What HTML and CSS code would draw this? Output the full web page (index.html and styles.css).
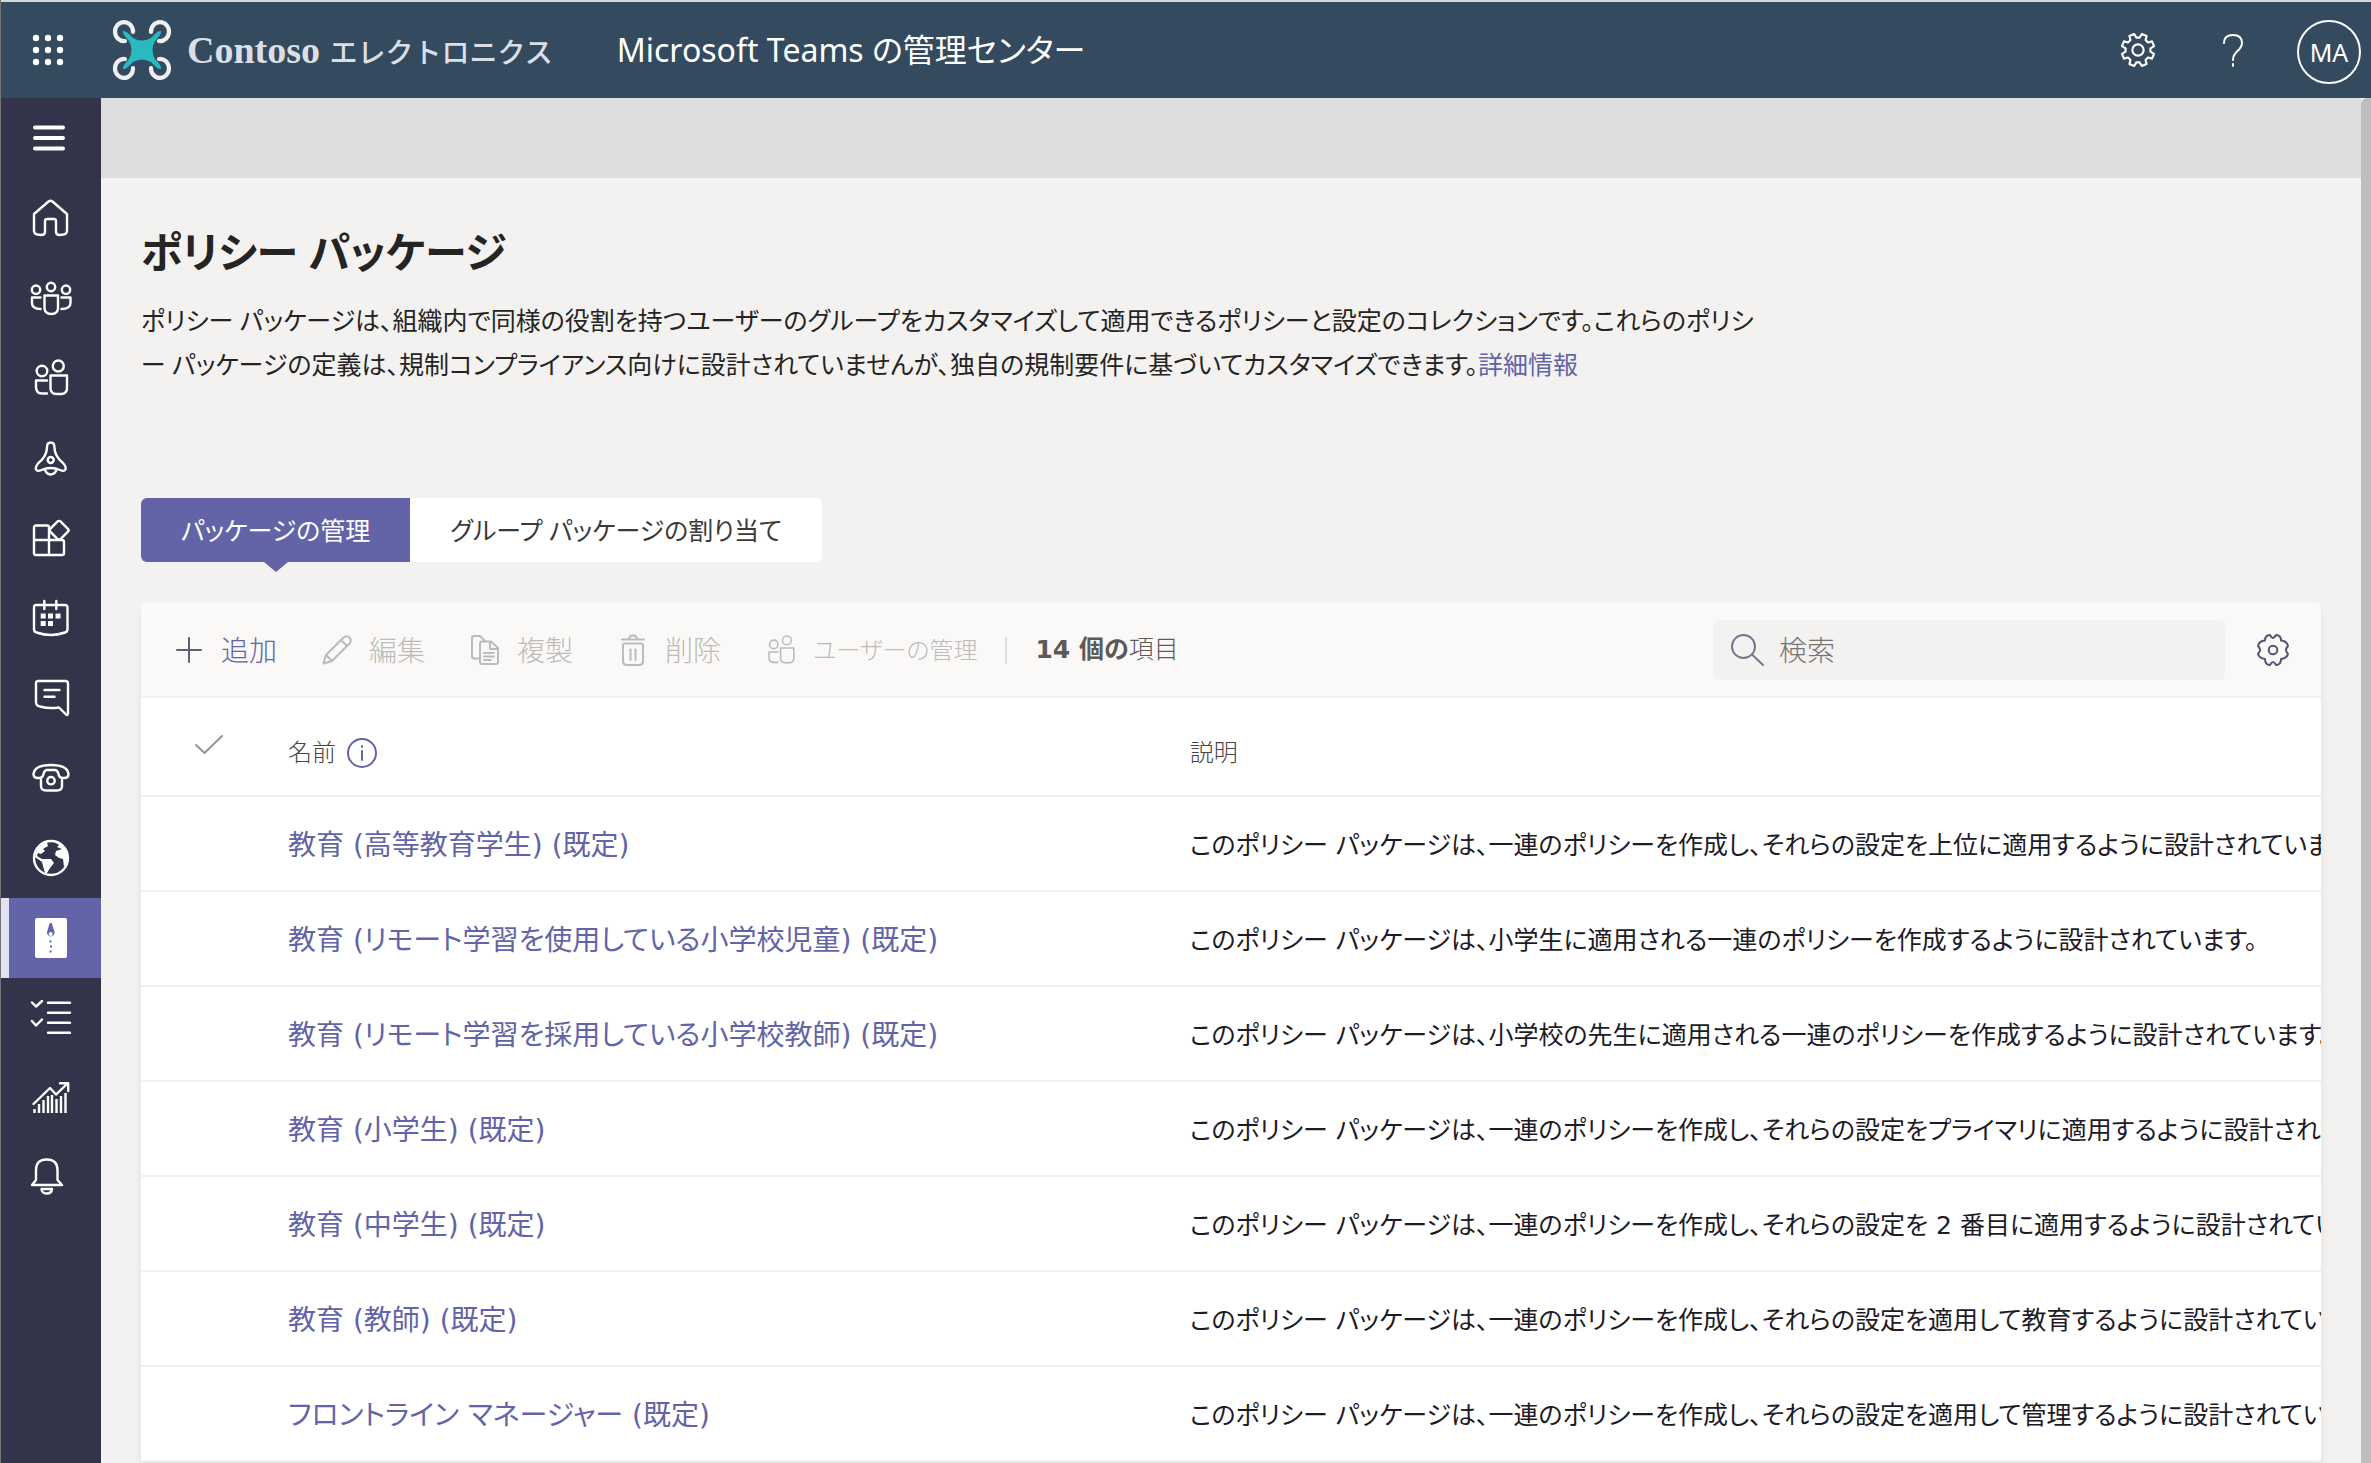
FILE: index.html
```html
<!DOCTYPE html>
<html lang="ja">
<head>
<meta charset="utf-8">
<meta name="viewport" content="width=device-width, initial-scale=1">
<title>ポリシー パッケージ - Microsoft Teams の管理センター</title>
<link rel="stylesheet" href="styles.css">
</head>
<body>
<svg class="sprite" aria-hidden="true">
  <symbol id="gear" viewBox="0 0 32 32">
    <path d="M27.7 17.6 31.1 19.6 29.2 24.1 25.4 23.1 23.1 25.4 24.1 29.2 19.6 31.1 17.6 27.7 14.4 27.7 12.4 31.1 7.9 29.2 8.9 25.4 6.6 23.1 2.8 24.1 .9 19.6 4.3 17.6 4.3 14.4 .9 12.4 2.8 7.9 6.6 8.9 8.9 6.6 7.9 2.8 12.4 .9 14.4 4.3 17.6 4.3 19.6 .9 24.1 2.8 23.1 6.6 25.4 8.9 29.2 7.9 31.1 12.4 27.7 14.4Z"/>
    <circle cx="16" cy="16" r="5.3"/>
  </symbol>
  <symbol id="gear-soft" viewBox="0 0 32 32">
    <path d="M13 1Q16 7 19 1Q24 1 24 6.500Q30 7 31 12Q27 16 31 20Q30 24 24 25Q24 31 19 31Q16 25 13 31Q8 31 8 25Q2 24 1 20Q5 16 1 12Q2 7 8 6.500Q8 1 13 1Z"/>
    <circle cx="16" cy="16" r="4.3"/>
  </symbol>
  <symbol id="people" viewBox="0 0 40 40">
    <circle cx="11" cy="13" r="5.3"/><circle cx="27.3" cy="8" r="5.5"/>
    <path d="M19.5 17.5H36V30Q36 36 30 36H25.500Q19.500 36 19.500 30ZM16 22.500H5V29Q5 35.500 11 35.500H16"/>
  </symbol>
</svg>
<div class="app">
  <header class="topbar">
    <button class="icon-button waffle" type="button" aria-label="アプリ起動ツール">
      <svg width="32" height="32" viewBox="0 0 32 32" fill="#fff"><circle cx="4" cy="4" r="3.200"/><circle cx="16" cy="4" r="3.200"/><circle cx="28" cy="4" r="3.200"/><circle cx="4" cy="16" r="3.200"/><circle cx="16" cy="16" r="3.200"/><circle cx="28" cy="16" r="3.200"/><circle cx="4" cy="28" r="3.200"/><circle cx="16" cy="28" r="3.200"/><circle cx="28" cy="28" r="3.200"/></svg>
    </button>
    <a class="brand" href="#">
      <svg width="58" height="60" viewBox="0 0 58 60" fill="none">
        <g stroke="#eef1f4" stroke-width="4.200" stroke-linecap="round">
          <path d="M20 12A9 9.500 0 1 0 12 21"/>
          <path d="M38 12A9 9.500 0 1 1 46 21"/>
          <path d="M12 39A9 9.500 0 1 0 20 48"/>
          <path d="M46 39A9 9.500 0 1 1 38 48"/>
        </g>
        <path fill="#28babf" d="M10 11Q13 10 20 18Q29 23 38 18Q45 10 48 11Q49 14 42 21Q37 30 42 39Q49 46 48 49Q45 50 38 42Q29 37 20 42Q13 50 10 49Q9 46 16 39Q21 30 16 21Q9 14 10 11Z"/>
      </svg>
      <span class="brand-name">Contoso <span class="brand-kana">エレクトロニクス</span></span>
    </a>
    <span class="product">Microsoft Teams の管理センター</span>
    <div class="top-actions">
      <button class="icon-button" type="button" aria-label="設定"><svg class="line" width="34" height="34"><use href="#gear"/></svg></button>
      <button class="icon-button" type="button" aria-label="ヘルプ">
        <svg class="line" width="32" height="34" viewBox="0 0 32 34"><path d="M7 10Q7 2 16 2T25 10Q25 14 20.500 18T16 27M16 31V33"/></svg>
      </button>
      <button class="avatar" type="button">MA</button>
    </div>
  </header>
  <div class="body">
    <nav class="rail" aria-label="ナビゲーション">
      <button type="button" class="rail-item" aria-label="メニュー"><svg viewBox="0 0 40 40" stroke-width="4.400"><path d="M4 9.500H32M4 20H32M4 30.500H32"/></svg></button>
      <a href="#" class="rail-item" aria-label="ホーム"><svg viewBox="0 0 40 40"><path d="M3 16 17.500 3.500Q19.500 2 21.500 3.500L36 16V33Q36 37 29 37Q25 37 25 34V23Q25 21 23 21H16.500Q14 21 14 23V34Q14 37 10 37Q3 37 3 33Z"/></svg></a>
      <a href="#" class="rail-item" aria-label="チーム"><svg viewBox="0 0 40 40"><circle cx="5" cy="11.700" r="4.200"/><circle cx="20" cy="9" r="4.200"/><circle cx="35" cy="11.700" r="4.200"/><path d="M13.500 17.500H27V30Q27 36 20.300 36T13.500 30ZM9.500 19.500H1V25Q1 31 9.500 31M30.500 19.500H39.500V25Q39.500 31 30.500 31"/></svg></a>
      <a href="#" class="rail-item" aria-label="ユーザー"><svg><use href="#people"/></svg></a>
      <a href="#" class="rail-item" aria-label="デバイス"><svg viewBox="0 0 40 40"><path d="M16 9Q16 4.500 19.700 4.500T23.400 9Q23.400 18 32 25Q35.500 29 34.500 31.500Q33 34 29 32L25 30.500Q19.700 29.500 14.500 30.500L10.500 32Q6.500 34 5 31.500Q4 29 7.500 25Q16 18 16 9ZM14 32Q16 36.500 19.700 36.500T25.500 32"/><circle cx="19.700" cy="22" r="3"/></svg></a>
      <a href="#" class="rail-item" aria-label="アプリ"><svg viewBox="0 0 40 40"><path d="M18 22V9Q18 7.500 16 7.500H5Q3 7.500 3 9.500V35Q3 37 5 37H31Q33 37 33 35V24Q33 22 31 22ZM18 22V37M3 22H18"/><rect x="20.800" y="5" width="14.500" height="14.500" rx="2" transform="rotate(45 28 12.300)"/></svg></a>
      <a href="#" class="rail-item" aria-label="会議"><svg viewBox="0 0 40 40"><path d="M5 7H34Q36.500 7 36.500 9.500V31Q36.500 34 34 34.500Q20 39.500 5.500 34.500Q3 34 3 31V9.500Q3 7 5 7ZM13.300 3V11M25.300 3V11"/><path class="solid" d="M9.700 15.500h5v5h-5zM17 15.500h5v5h-5zM24.500 15.500h5v5h-5zM9.700 23h5v5h-5zM17 23h5v5h-5z"/></svg></a>
      <a href="#" class="rail-item" aria-label="メッセージ"><svg viewBox="0 0 40 40"><path d="M7 3H34.500Q37 3 37 5.500V35Q37 38 35 36.500L28 29.500Q18 31 9 28.500Q5 28 5 24V5Q5 3 7 3ZM13.500 12H28.500M13.500 18.800H23.500"/></svg></a>
      <a href="#" class="rail-item" aria-label="音声"><svg viewBox="0 0 40 40"><path d="M2.500 16.500Q3 7 20 7T37.500 16.500Q37 20.500 32 20Q28 20 27.500 16Q26.500 12 24 12H16Q13.500 12 12.500 16Q12 20 8 20Q3 20.500 2.500 16.500ZM10 22V28Q10 32.500 15 32.500H26Q31 32.500 31 28V22"/><circle cx="20" cy="22.700" r="3.700"/></svg></a>
      <a href="#" class="rail-item" aria-label="場所"><svg viewBox="0 0 40 40"><circle cx="20" cy="20" r="17"/><path class="solid" d="M5 14Q8 6 16 4.500L17 8L12 11L14 13L10 16L7 15L6 18L11 21H20L23 25L19 30L16 35L14 35L12 28L11 24L4 19ZM25 5L28 7L26 9L31 11L25 13L24 17L28 20L32 21L33 29Q40 20 35 11Q31 6 25 5Z"/></svg></a>
      <a href="#" class="rail-item active" aria-current="page" aria-label="ポリシー パッケージ"><svg viewBox="0 0 40 40"><rect class="solid" x="4" y="0" width="32" height="40" rx="2"/><path class="pen" d="M18.700 5H20.700L23.500 14A3.800 3.800 0 1 1 16 14Z"/><circle class="pen-hole" cx="19.700" cy="16" r="2"/><path class="pen" d="M18.500 22.500h2v2h-2zM19 27.500h2v2h-2zM18.500 32.500h2v2h-2z"/></svg></a>
      <a href="#" class="rail-item" aria-label="計画"><svg viewBox="0 0 40 40"><path d="M17 4.700H39M17 14.700H39M17 24.700H39M17 34.700H39M1 4.500 5 8.500 11 3M1 23 5 27.500 11 21.500"/></svg></a>
      <a href="#" class="rail-item" aria-label="分析とレポート"><svg viewBox="0 0 40 40"><path d="M2.500 26 19 10 25 16.500 36 6M29 5.200H37.200V13"/><path class="bars" d="M3.500 35V31M8 35V26M12.500 35V22M17 35V18M21 35V17M25.500 35V21M30 35V18M34.500 35V15"/></svg></a>
      <a href="#" class="rail-item" aria-label="通知とアラート"><svg viewBox="0 0 40 40"><path d="M5 22V12Q5 1.500 15.700 1.500T26.500 12V22L31 27H1ZM10.500 31H21Q20.500 35.500 15.700 35.500T10.500 31Z"/></svg></a>
    </nav>
    <div class="page">
      <div class="band"></div>
      <main class="content">
        <h1>ポリシー パッケージ</h1>
        <p class="intro">ポリシー パッケージは、組織内で同様の役割を持つユーザーのグループをカスタマイズして適用できるポリシーと設定のコレクションです。これらのポリシー パッケージの定義は、規制コンプライアンス向けに設計されていませんが、独自の規制要件に基づいてカスタマイズできます。<a href="#">詳細情報</a></p>
        <div class="tabs" role="tablist">
          <button type="button" class="tab selected" role="tab" aria-selected="true">パッケージの管理</button>
          <button type="button" class="tab" role="tab" aria-selected="false">グループ パッケージの割り当て</button>
        </div>
        <section class="panel">
          <div class="toolbar">
            <div class="commands">
              <button type="button" class="command primary"><svg viewBox="0 0 32 32"><path d="M4 16H28M16 4V28"/></svg>追加</button>
              <button type="button" class="command" disabled><svg viewBox="0 0 32 32"><path d="M2.500 29.500 5 21 22.500 3.500Q25.500 1 28.500 3.500Q31 6.500 28.500 9.500L11 27ZM5 21 11 27M20 6 26 12"/></svg>編集</button>
              <button type="button" class="command" disabled><svg viewBox="0 0 32 32"><path d="M11 24.500H5Q3 24.500 3 22.500V4Q3 2 5 2H11L16 7M13 7.500H22L29 14V28Q29 30 27 30H13Q11 30 11 28V9.500Q11 7.500 13 7.500ZM21 8V15H29M15 19H25M15 22.500H25M15 26H22"/></svg>複製</button>
              <button type="button" class="command" disabled><svg viewBox="0 0 32 32"><path d="M5 5.500H27M12 5.500Q12 1.500 16 1.500T20 5.500M8 9.500H24Q26 9.500 26 11.500V27Q26 31 22 31H10Q6 31 6 27V11.500Q6 9.500 8 9.500ZM13.500 15.500V26M18.500 15.500V26"/></svg>削除</button>
              <button type="button" class="command long" disabled><svg><use href="#people"/></svg>ユーザーの管理</button>
            </div>
            <span class="divider"></span>
            <span class="count"><b>14 個の</b>項目</span>
            <label class="search"><svg viewBox="0 0 32 32"><circle cx="12.500" cy="12.500" r="11.500"/><path d="M21 20.500 32 31"/></svg><input type="search" placeholder="検索" aria-label="検索"></label>
            <button type="button" class="icon-button settings" aria-label="列の設定"><svg width="32" height="32"><use href="#gear-soft"/></svg></button>
          </div>
          <table>
            <thead>
              <tr>
                <th class="pick"><svg width="28" height="20" viewBox="0 0 28 20"><path d="M1 10 9.500 18 27 1"/></svg></th>
                <th class="name"><span class="heading">名前<svg width="32" height="32" viewBox="0 0 32 32"><circle cx="16" cy="16" r="14"/><path d="M16 14V23M16 9V10"/></svg></span></th>
                <th class="about">説明</th>
              </tr>
            </thead>
            <tbody>
              <tr><td></td><td><a href="#">教育 (高等教育学生) (既定)</a></td><td class="about">このポリシー パッケージは、一連のポリシーを作成し、それらの設定を上位に適用するように設計されています。</td></tr>
              <tr><td></td><td><a href="#">教育 (リモート学習を使用している小学校児童) (既定)</a></td><td class="about">このポリシー パッケージは、小学生に適用される一連のポリシーを作成するように設計されています。</td></tr>
              <tr><td></td><td><a href="#">教育 (リモート学習を採用している小学校教師) (既定)</a></td><td class="about">このポリシー パッケージは、小学校の先生に適用される一連のポリシーを作成するように設計されています。</td></tr>
              <tr><td></td><td><a href="#">教育 (小学生) (既定)</a></td><td class="about">このポリシー パッケージは、一連のポリシーを作成し、それらの設定をプライマリに適用するように設計されています。</td></tr>
              <tr><td></td><td><a href="#">教育 (中学生) (既定)</a></td><td class="about">このポリシー パッケージは、一連のポリシーを作成し、それらの設定を 2 番目に適用するように設計されています。</td></tr>
              <tr><td></td><td><a href="#">教育 (教師) (既定)</a></td><td class="about">このポリシー パッケージは、一連のポリシーを作成し、それらの設定を適用して教育するように設計されています。</td></tr>
              <tr><td></td><td><a href="#">フロントライン マネージャー (既定)</a></td><td class="about">このポリシー パッケージは、一連のポリシーを作成し、それらの設定を適用して管理するように設計されています。</td></tr>
            </tbody>
          </table>
        </section>
      </main>
    </div>
    <div class="scroll-thumb"></div>
  </div>
</div>
</body>
</html>
```
FILE: styles.css
```css
* { box-sizing: border-box; }

:root {
  --accent: #6264a7;
  --rule: #f1f1f1;
  --canvas: #f3f2f1;
  --ui: "Noto Sans", "Noto Sans CJK JP", sans-serif;
  --data: "DejaVu Sans", "Noto Sans CJK JP", sans-serif;
}

body {
  margin: 0;
  font-family: var(--ui);
  font-size: 25px;
  line-height: 44px;
  font-feature-settings: "palt";
  color: #252423;
  background: var(--canvas);
}

a { color: var(--accent); text-decoration: none; }

button, input {
  font: inherit;
  font-feature-settings: inherit;
  color: inherit;
  border: 0;
  padding: 0;
  background: none;
}

svg { flex: none; overflow: visible; }

.sprite { position: absolute; width: 0; height: 0; }

.app {
  display: flex;
  flex-direction: column;
  height: 100vh;
  overflow: hidden;
  border-left: 1px solid #757575;
}

/* Top bar */
.topbar {
  flex: none;
  display: flex;
  align-items: center;
  height: 98px;
  padding-right: 10px;
  border-top: 2px solid #d5dade;
  background: #344a5e;
  color: #fff;
}

.icon-button { display: flex; align-items: center; justify-content: center; }

.waffle { width: 94px; }

.brand { display: flex; align-items: center; margin-left: 18px; }

.brand-name {
  margin-left: 16px;
  font: bold 38px/44px "Liberation Serif", serif;
  color: #d9dfe5;
}

.brand-kana {
  font: 500 28px/44px "Noto Sans CJK JP", sans-serif;
}

.product { margin-left: 64px; font-size: 32px; }

.top-actions { display: flex; align-items: center; gap: 62px; margin-left: auto; }

.line, .command svg, .search svg, .settings svg, th svg {
  fill: none;
  stroke: currentColor;
  stroke-width: 2;
  stroke-linecap: round;
  stroke-linejoin: round;
}

.avatar {
  width: 64px;
  height: 64px;
  border: 2px solid #fff;
  border-radius: 50%;
}

.top-actions .avatar { margin: 4px 0 0 -14px; }

/* Left rail */
.body { display: flex; flex: 1; min-height: 0; }

.rail {
  flex: none;
  display: flex;
  flex-direction: column;
  width: 100px;
  background: #33344a;
}

.rail-item {
  display: flex;
  align-items: center;
  justify-content: center;
  height: 80px;
}

.rail-item svg {
  width: 40px;
  height: 40px;
  fill: none;
  stroke: #fff;
  stroke-width: 2.4;
  stroke-linecap: round;
  stroke-linejoin: round;
}

.rail-item svg[stroke-width] { stroke-width: 4; }
.rail-item .solid { fill: #fff; stroke: none; }
.rail-item .bars { stroke-linecap: butt; }
.rail-item .pen { fill: var(--accent); stroke: none; }
.rail-item .pen-hole { fill: #fff; stroke: none; }

.active {
  background: var(--accent);
  border-left: 8px solid #e2e2f6;
  padding-right: 8px;
}

/* Page */
.page { flex: 1; min-width: 0; }

.band { height: 80px; background: #dedede; }

.content { padding: 44px 40px 0; }

.scroll-thumb {
  flex: none;
  width: 10px;
  border-top-left-radius: 6px;
  background: #bdbdbd;
}

h1 { margin: 0; font-size: 42px; line-height: 60px; font-weight: 700; }

.intro { max-width: 1618px; margin: 16px 0 0; line-break: loose; }

.tabs { display: flex; margin-top: 112px; }

.tab {
  height: 64px;
  padding: 0 40px;
  background: #fff;
  color: #3b3a39;
  border-radius: 0 6px 6px 0;
}

.selected {
  position: relative;
  background: var(--accent);
  color: #fff;
  border-radius: 6px 0 0 6px;
}

.selected::after {
  content: "";
  position: absolute;
  top: 100%;
  left: 50%;
  margin-left: -12px;
  border: 12px solid transparent;
  border-top: 10px solid var(--accent);
  border-bottom: 0;
}

/* Package list */
.panel {
  margin-top: 40px;
  border-radius: 6px 6px 0 0;
  background: #fff;
  box-shadow: 0 8px 8px rgba(0, 0, 0, 0.08);
}

.toolbar {
  display: flex;
  align-items: center;
  height: 96px;
  padding: 2px 32px 0;
  border-bottom: 2px solid var(--rule);
  border-radius: 6px 6px 0 0;
  background: #faf9f8;
}

.commands { display: flex; gap: 44px; }

.command {
  display: flex;
  align-items: center;
  gap: 16px;
  font-size: 28px;
  font-weight: 300;
  color: #bdbbb9;
}

.command svg { width: 32px; height: 32px; }

.long { font-size: 24px; }

.primary { color: var(--accent); }

.primary svg { color: #605e7d; }

.divider { width: 2px; height: 27px; margin: 0 28px; background: #e1dfdd; }

.count { color: #5b5a58; font-family: var(--data); font-weight: 300; }

.count b { font-weight: 700; }

.search {
  display: flex;
  align-items: center;
  gap: 16px;
  width: 512px;
  height: 60px;
  margin-left: auto;
  padding: 0 18px;
  border-radius: 6px;
  background: var(--canvas);
}

.search svg { width: 32px; height: 32px; color: #77768f; }

.search input { flex: 1; min-width: 0; outline: 0; font-size: 28px; }

.search input::placeholder { color: #7a7571; font-weight: 300; opacity: 1; }

.settings { width: 32px; margin-left: 32px; color: #55546f; }

table {
  width: 100%;
  table-layout: fixed;
  border-collapse: collapse;
  font-family: var(--data);
}

th, td {
  padding: 0;
  border-bottom: 2px solid var(--rule);
  text-align: left;
  white-space: nowrap;
  overflow: hidden;
}

th {
  height: 98px;
  padding-top: 12px;
  font-size: 24px;
  font-weight: 300;
  color: #484644;
}

td { height: 95px; padding-top: 4px; font-size: 28px; }

th.pick { width: 147px; padding: 0 0 0 54px; color: #979593; }

th.name { width: 41%; }

.about { padding-left: 8px; }

.heading { display: flex; align-items: center; gap: 10px; }

.heading svg { color: var(--accent); }

td.about { font-size: 25px; color: #201a26; }
```
